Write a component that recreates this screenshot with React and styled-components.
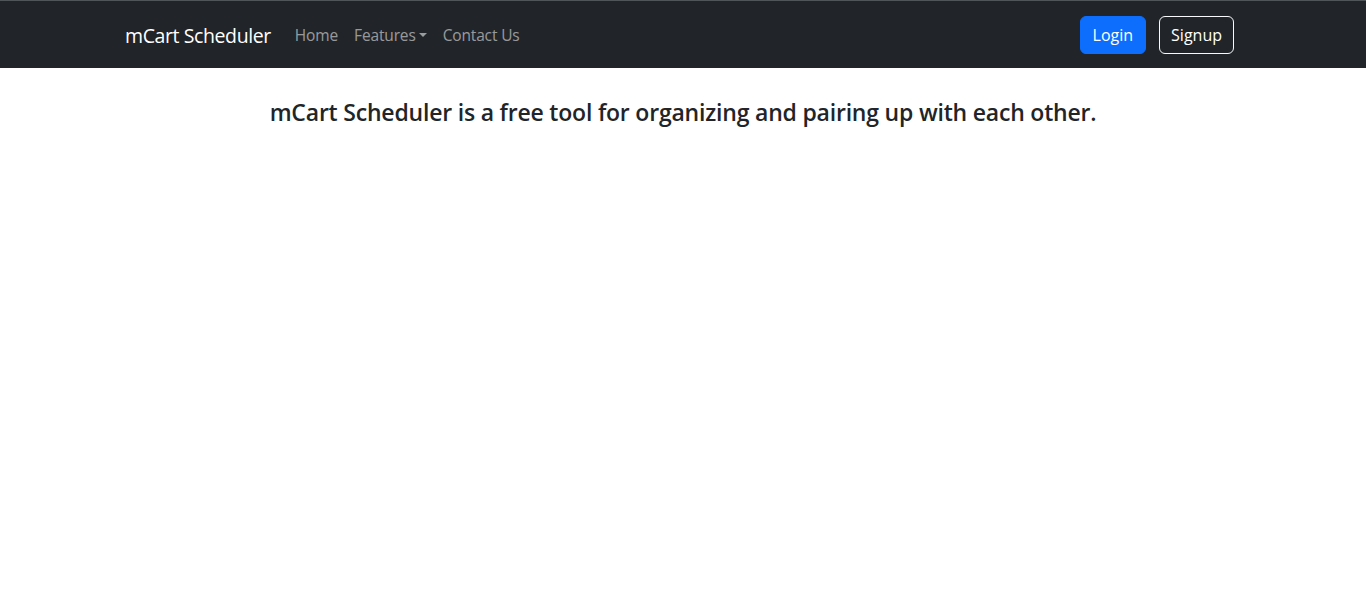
import React from "react";
import styled, { createGlobalStyle } from "styled-components";

const Global = createGlobalStyle`
  html, body { margin: 0; padding: 0; background: #fff; }
  body {
    font-family: "Open Sans", "Noto Sans", sans-serif;
    color: #212529;
    font-size: 16px;
    line-height: 1.5;
  }
  * { box-sizing: border-box; }
`;

const Navbar = styled.nav`
  background: #212529;
  border-top: 1px solid #50555a;
  height: 68px;
  padding-top: 2px;
  display: flex;
  align-items: center;
`;

const Container = styled.div`
  width: 1140px;
  margin: 0 auto;
  padding: 0 12px;
  display: flex;
  align-items: center;
`;

const Brand = styled.a`
  color: #fff;
  font-size: 19.5px;
  letter-spacing: -0.4px;
  text-decoration: none;
  margin-right: 16px;
  white-space: nowrap;
`;

const NavList = styled.ul`
  list-style: none;
  margin: 0;
  padding: 0;
  display: flex;
  align-items: center;
`;

const NavLink = styled.a`
  display: inline-flex;
  align-items: center;
  color: rgba(255, 255, 255, 0.55);
  text-decoration: none;
  padding: 8px;
  font-size: 15.5px;
  letter-spacing: -0.15px;
`;

const Caret = styled.span`
  display: inline-block;
  margin-left: 3px;
  border-top: 4.5px solid currentColor;
  border-left: 4.5px solid transparent;
  border-right: 4.5px solid transparent;
  transform: translateY(-1px);
`;

const Actions = styled.div`
  margin-left: auto;
  margin-right: 7px;
  margin-top: -2px;
  display: flex;
  gap: 13px;
`;

const Button = styled.button`
  font-family: inherit;
  font-size: 16px;
  line-height: 1.5;
  padding: 6px ${(p) => (p.$variant === "primary" ? "12px" : "11px")};
  border-radius: 6px;
  cursor: pointer;
  color: #fff;
  background: ${(p) => (p.$variant === "primary" ? "#0d6efd" : "transparent")};
  border: 1px solid ${(p) => (p.$variant === "primary" ? "#0d6efd" : "#f8f9fa")};
`;

const Main = styled.main`
  padding-top: 31px;
  text-align: center;
`;

const Heading = styled.h4`
  margin: 0;
  font-size: 23px;
  letter-spacing: -0.2px;
  font-weight: 600;
  line-height: 1.2;
  color: #212529;
`;

export default function App() {
  return (
    <>
      <Global />
      <Navbar>
        <Container>
          <Brand href="#">mCart Scheduler</Brand>
          <NavList>
            <li><NavLink href="#">Home</NavLink></li>
            <li><NavLink href="#">Features<Caret /></NavLink></li>
            <li><NavLink href="#">Contact Us</NavLink></li>
          </NavList>
          <Actions>
            <Button $variant="primary">Login</Button>
            <Button $variant="outline">Signup</Button>
          </Actions>
        </Container>
      </Navbar>
      <Main>
        <Heading>mCart Scheduler is a free tool for organizing and pairing up with each other.</Heading>
      </Main>
    </>
  );
}
